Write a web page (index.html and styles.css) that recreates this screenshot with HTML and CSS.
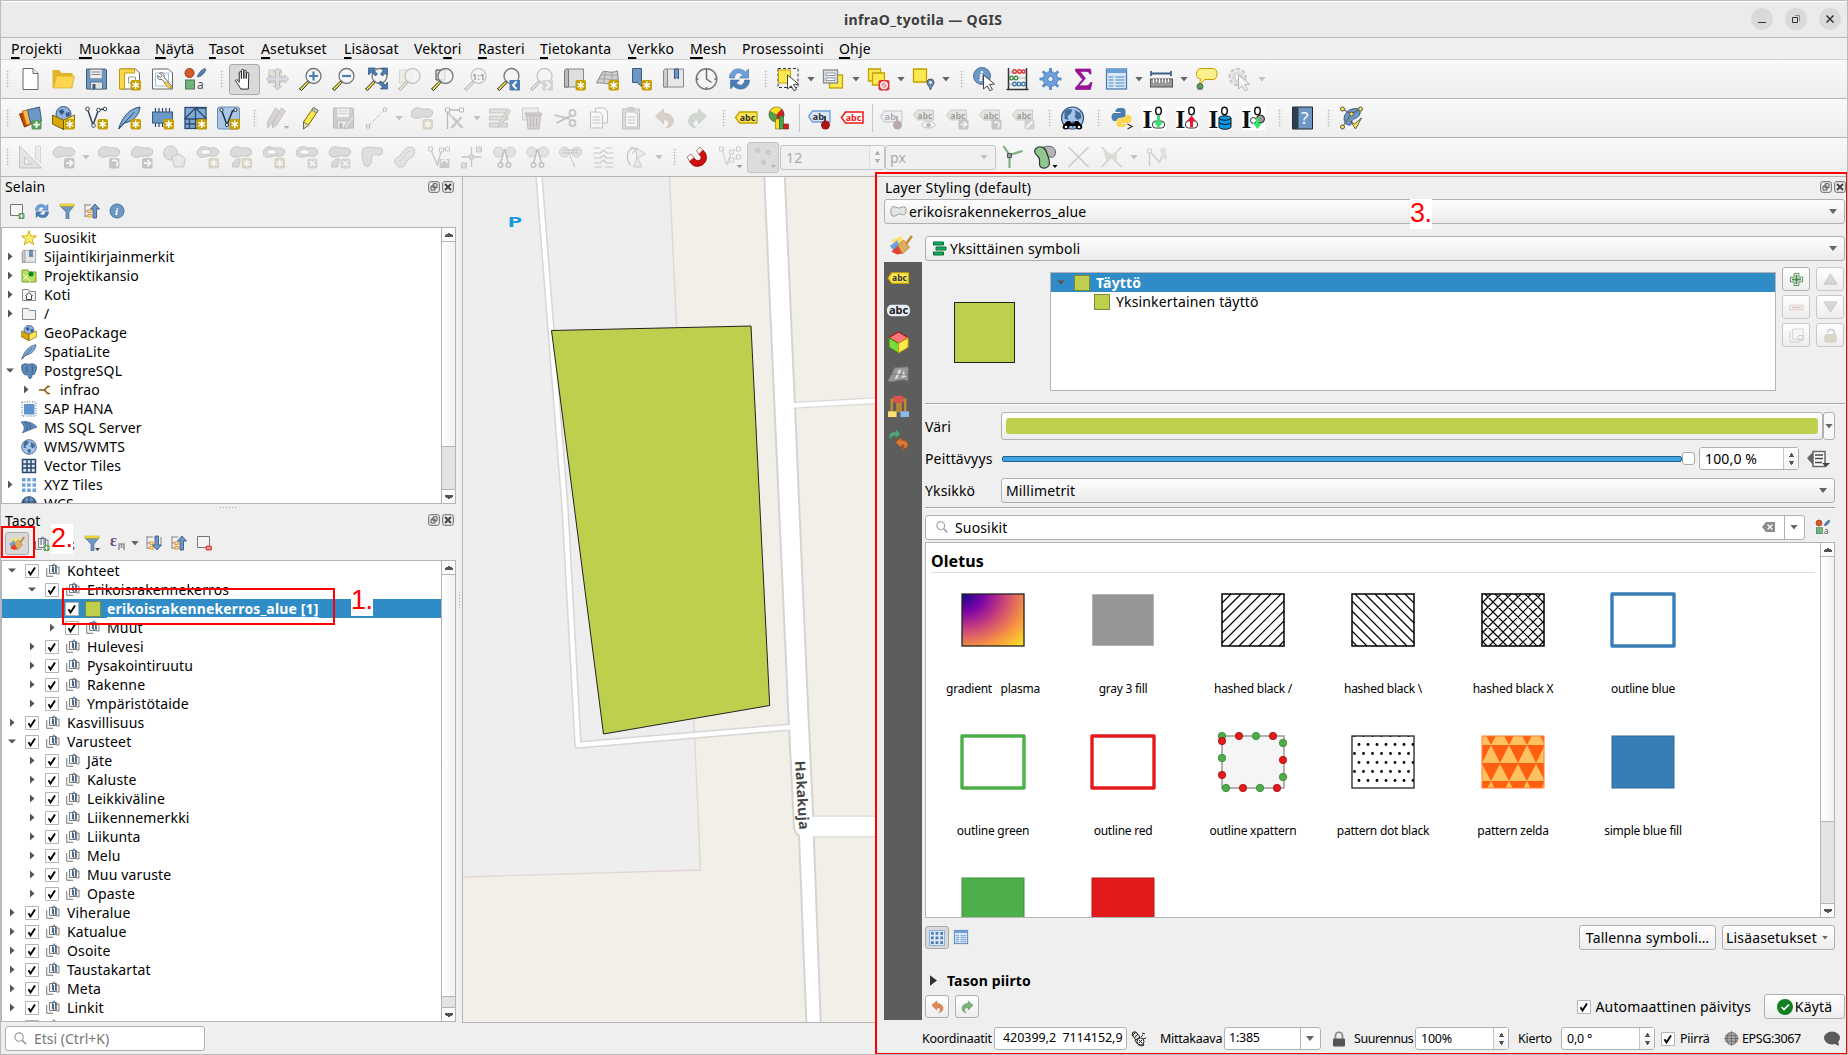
FILE: index.html
```html
<!DOCTYPE html>
<html lang="fi">
<head>
<meta charset="utf-8">
<title>infraO_tyotila — QGIS</title>
<link rel="stylesheet" href="styles.css">
</head>
<body>
<svg class="defs" aria-hidden="true">
<defs>
<pattern id="hz" width="18" height="36" patternUnits="userSpaceOnUse"><rect width="18" height="36" fill="#ff6010"/><path d="M0 18L9 0L18 18zM-9 36L0 19L9 36zM9 36L18 19L27 36z" fill="#ffc060"/></pattern>
<pattern id="dots" width="9" height="18" patternUnits="userSpaceOnUse"><circle cx="4.500" cy="1.500" r="1.400"/><circle cx="0" cy="10.500" r="1.400"/><circle cx="9" cy="10.500" r="1.400"/></pattern>
<radialGradient id="plasma" cx="0" cy="0" r="1.400"><stop offset="0" stop-color="#0d0887"/><stop offset=".25" stop-color="#7e03a8"/><stop offset=".5" stop-color="#cc4778"/><stop offset=".75" stop-color="#f89540"/><stop offset="1" stop-color="#f6e626"/></radialGradient>
</defs>
</svg>
<svg class="defs symbols" aria-hidden="true">
<symbol id="star" viewBox="0 0 24 24"><rect x="13" y="13" width="10.500" height="10.500" rx="2" fill="#c4a000"/><path d="M18.200 14.500v7.500M15 16.300l6.500 3.900M21.500 16.300L15 20.200" stroke="#fff" stroke-width="1.500"/></symbol>
<symbol id="new" viewBox="0 0 24 24"><path d="M4.500 1.500h10l5 5v16h-15z" fill="#fff" stroke="#666"/><path d="M14.500 1.500v5h5" fill="#eee" stroke="#666"/></symbol>
<symbol id="open" viewBox="0 0 24 24"><path d="M1 3h7l2 3h11v15H1z" fill="#e4b32a"/><path d="M5 9h18l-3 12H2z" fill="#fdd54f" stroke="#d9a81f" stroke-width=".7"/></symbol>
<symbol id="save" viewBox="0 0 24 24"><path d="M2 2h19l1 1v19H2z" fill="#6d97c4" stroke="#415a75"/><path d="M5.500 2.500h12v9h-12z" fill="#eee" stroke="#888" stroke-width=".6"/><path d="M7 5h9M7 7.500h9" stroke="#888"/><path d="M6 15h12v7H6z" fill="#dfe3e6" stroke="#415a75" stroke-width=".7"/><path d="M8 17h3v5H8z" fill="#415a75"/></symbol>
<symbol id="layout" viewBox="0 0 24 24"><path d="M3 2h15l4 4v16H3z" fill="#fff" stroke="#666"/><path d="M2 2h15v4H7v16H2z" fill="#fcd64f" stroke="#c4a000"/><path d="M11 10h7v6h-7z" fill="none" stroke="#999"/><use href="#star"/></symbol>
<symbol id="manager" viewBox="0 0 24 24"><path d="M2 2h16l4 4v16H2z" fill="#fff" stroke="#666"/><rect x="5" y="6" width="13" height="13" fill="none" stroke="#9cc0e4"/><path d="M9 6c3-1 5 1 4.500 4l8 9.500-2 2-8-9c-3 .5-5-1-4.500-4l3 2 1.500-2z" fill="#f4f4f4" stroke="#666"/><path d="M16 15l4.500 5-1.500 2-5-5.500z" fill="#fcd64f" stroke="#a80" stroke-width=".7"/></symbol>
<symbol id="styles" viewBox="0 0 24 24"><circle cx="6" cy="6" r="4.500" fill="#d45a2a" stroke="#9a3c18"/><path d="M14 10c0-3 4-7 7-8.500l1.500 1C21 6 18 10 14 10z" fill="#5380b5" stroke="#2f5180" stroke-width=".7"/><rect x="2" y="13" width="9" height="9" fill="#72b37c" stroke="#4a7c55"/><text x="13.500" y="22" class="ic" font-size="12" fill="#555">a</text></symbol>
<symbol id="hand" viewBox="0 0 24 24"><path d="M8 22c-1-3-4-6-5.500-9 1-1.500 2.500-.7 4 2V5c0-1.700 2.300-1.700 2.300 0v6V2.800c0-1.800 2.500-1.800 2.500 0V11V3.500c0-1.700 2.400-1.700 2.400 0V11l.6-5.500c.3-1.500 2.400-1.200 2.200.4L16 22z" fill="#fff" stroke="#222"/></symbol>
<symbol id="pan" viewBox="0 0 24 24"><rect x="3" y="3" width="13" height="13" fill="#d8c050" stroke="#a08820"/><path d="M12 1l4 4h-2v5h5V8l4 4-4 4v-2h-5v5h2l-4 4-4-4h2v-5H5v2l-4-4 4-4v2h5V5H8z" fill="#9db5d2" stroke="#3e5e85"/></symbol>
<symbol id="lens" viewBox="0 0 24 24"><path d="M1 22l8-8 1.500 1.500-7.500 8z" fill="#fce94f" stroke="#222"/><path d="M8.500 14l1.500-1.500 2 2L10.500 16z" fill="#222"/><circle cx="15" cy="9" r="7.500" fill="#f2f4f4" fill-opacity=".8" stroke="#777" stroke-width="1.300"/></symbol>
<symbol id="zin" viewBox="0 0 24 24"><use href="#lens"/><path d="M10.500 9h9M15 4.500v9" stroke="#4c7cb4" stroke-width="2.200"/></symbol>
<symbol id="zout" viewBox="0 0 24 24"><use href="#lens"/><path d="M10.500 9h9" stroke="#4c7cb4" stroke-width="2.200"/></symbol>
<symbol id="zfull" viewBox="0 0 24 24"><use href="#lens"/><path d="M4 1h7L9 3l4 4-2 2-4-4-3 3zM23 1v7l-2-2-3 3-2-2 3-4-2-2zM23 22h-7l2-2-4-4 2-2 5 4 2-3z" fill="#4c7cb4" stroke="#2c4f7c" stroke-width=".7"/></symbol>
<symbol id="zsel" viewBox="0 0 24 24"><rect x="2" y="3" width="13" height="13" fill="#e9e0a0" stroke="#b8a860"/><use href="#lens"/></symbol>
<symbol id="zlay" viewBox="0 0 24 24"><path d="M5.500 3h9v10h-9z" fill="#ddd" stroke="#444"/><use href="#lens"/></symbol>
<symbol id="z11" viewBox="0 0 24 24"><use href="#lens"/><text x="8.500" y="12.500" class="icb" font-size="9" textLength="13" lengthAdjust="spacingAndGlyphs">1:1</text></symbol>
<symbol id="zlast" viewBox="0 0 24 24"><use href="#lens"/><rect x="13" y="13" width="10.500" height="10.500" fill="#4c7cb4"/><path d="M20 14.500l-3.500 3.700 3.500 3.700" fill="none" stroke="#fff" stroke-width="2"/></symbol>
<symbol id="znext" viewBox="0 0 24 24"><use href="#lens"/><rect x="13" y="13" width="10.500" height="10.500" fill="#8aa"/><path d="M16.500 14.500l3.500 3.700-3.500 3.700" fill="none" stroke="#fff" stroke-width="2"/></symbol>
<symbol id="nmap" viewBox="0 0 24 24"><path d="M5 2h16v18H2V5z" fill="#dcdedf" stroke="#888"/><path d="M2 20V4c1-3 4-3 4 0v16z" fill="#bbb" stroke="#777"/><use href="#star"/></symbol>
<symbol id="n3d" viewBox="0 0 24 24"><path d="M1 16L7 5c4-2 7 2 15-1l1 12c-8 3-14-1-22 0z" fill="#cfd1cf" stroke="#888"/><path d="M3 12c8-1 12 2 20 0M5 8c7-1 10 1 17 0M10 5L8 16M16 5l1 12" stroke="#999" stroke-width=".8" fill="none"/><use href="#star"/></symbol>
<symbol id="nbook" viewBox="0 0 24 24"><path d="M4 1.500h9v18l-4.500-4-4.500 0z" fill="#6d97c4" stroke="#415a75"/><use href="#star"/></symbol>
<symbol id="book" viewBox="0 0 24 24"><path d="M5 2h17v18H2V5z" fill="#e6e7e8" stroke="#888"/><path d="M2 20V4c1-3 4-3 4 0v16z" fill="#ccc" stroke="#888"/><path d="M13 2h4v10l-2-2-2 2z" fill="#6d97c4" stroke="#3a5a80"/></symbol>
<symbol id="clock" viewBox="0 0 24 24"><circle cx="12" cy="12" r="10.300" fill="#f4f4f4" stroke="#777" stroke-width="1.400"/><path d="M12 4v8l5 3.500M12 2v2M12 20v2M2 12h2M20 12h2" fill="none" stroke="#666" stroke-width="1.400"/></symbol>
<symbol id="refresh" viewBox="0 0 24 24"><path d="M2 11C2 2 12-1 18 5l3-3v9h-9l3-3c-3-4-8-2-8 3z" fill="#6d9fd8" stroke="#3d6da5" stroke-width=".6"/><path d="M22 13c0 9-10 12-16 6l-3 3v-9h9l-3 3c3 4 8 2 8-3z" fill="#4c7cb4" stroke="#3d6da5" stroke-width=".6"/></symbol>
<symbol id="cur" viewBox="0 0 24 24"><path d="M11 8l11 9-5 .5 3 5-2.500 1.300-2.800-5-3.700 3.200z" fill="#fff" stroke="#444"/></symbol>
<symbol id="sel" viewBox="0 0 24 24"><rect x="1.500" y="1.500" width="20" height="19" fill="none" stroke="#333" stroke-dasharray="3 2"/><path d="M2 3h12v13H2z" fill="#fce94f" stroke="#c4a000"/><use href="#cur"/></symbol>
<symbol id="selform" viewBox="0 0 24 24"><rect x="8" y="8" width="13" height="13" fill="#fce94f" stroke="#c4a000" stroke-width="1.300"/><rect x="2" y="3" width="14" height="13" fill="#e4e4e4" stroke="#888" stroke-width="1.300"/><path d="M4.500 6h9v2.500h-9zM4.500 11h9v2.500h-9z" fill="#fff" stroke="#678" stroke-width=".7"/></symbol>
<symbol id="desel" viewBox="0 0 24 24"><path d="M2 2h12v12H2z" fill="#fce94f" stroke="#c4a000" stroke-width="1.300"/><path d="M6 6h12v12H6z" fill="#fce94f" stroke="#c4a000" stroke-width="1.300"/><rect x="12" y="13" width="11" height="10.500" rx="2" fill="#e03030"/><circle cx="17.500" cy="18.200" r="3.300" fill="#e88" stroke="#fff" stroke-width="1.300"/><path d="M20 16l-5 4.500" stroke="#fff"/></symbol>
<symbol id="selloc" viewBox="0 0 24 24"><path d="M2 2h13v13H2z" fill="#fce94f" stroke="#c4a000" stroke-width="1.300"/><path d="M19 23c-1-4-3.500-5-3.500-7.500a3.500 3.500 0 017 0C22.500 18 20 19 19 23z" fill="#6d8fae" stroke="#456"/><circle cx="19" cy="15.500" r="1.200" fill="#fff"/></symbol>
<symbol id="ident" viewBox="0 0 24 24"><circle cx="9.500" cy="9" r="8.500" fill="#6d97c4" stroke="#4c74a0"/><text x="6.500" y="14" class="ics it" font-size="14" fill="#fff">i</text><use href="#cur"/></symbol>
<symbol id="abac" viewBox="0 0 24 24"><path d="M3 1v22M21 1v22M1 22.500h22" stroke="#333" stroke-width="1.500"/><path d="M3 5h18M3 11h18M3 17h18" stroke="#888" stroke-width=".7"/><g fill="#fff" stroke-width="1.400"><g stroke="#d33"><circle cx="9" cy="4.500" r="1.800"/><circle cx="14" cy="4.500" r="1.800"/><circle cx="18" cy="4.500" r="1.500"/></g><g stroke="#4a8c4a"><circle cx="6" cy="11" r="1.800"/><circle cx="10.500" cy="11" r="1.800"/></g><g stroke="#3d79a8"><circle cx="9" cy="17" r="1.800"/><circle cx="13.500" cy="17" r="1.800"/><circle cx="18" cy="17" r="1.800"/></g></g></symbol>
<symbol id="gear" viewBox="0 0 24 24"><g stroke="#5f92cc" stroke-width="3"><path d="M12 1v22M1 12h22M4.200 4.200l15.600 15.600M19.800 4.200L4.200 19.800"/></g><circle cx="12" cy="12" r="7.500" fill="#6ea0dc" stroke="#4c7cb4" stroke-width=".7"/><circle cx="12" cy="12" r="2.700" fill="#f4f4f4" stroke="#4c7cb4"/></symbol>
<symbol id="sigma" viewBox="0 0 24 24"><path d="M4 2h15l.6 5h-1.500c-.5-2-1.500-2.600-4-2.600H8.500l5.500 7-6.500 7.400H14c3 0 4-1 5-3.300h1.500L19 22.500H4v-1.800l7-8.200L4 4z" fill="#a0109c" stroke="#7a0878" stroke-width=".6"/></symbol>
<symbol id="table" viewBox="0 0 24 24"><rect x="2" y="2" width="20" height="20" fill="#dbe8f7" stroke="#4c7cb4" stroke-width="1.300"/><path d="M2 2h20v4H2z" fill="#6d9fd8"/><path d="M4 10h5M4 13h5M4 16h5M4 19h5M11 10h9M11 13h9M11 16h9M11 19h9" stroke="#7ba6d6" stroke-width="1.500"/></symbol>
<symbol id="measure" viewBox="0 0 24 24"><path d="M1 6.500h21M1.500 4v5M21.500 4v5" stroke="#3d5f88" stroke-width="1.800"/><rect x="1" y="12" width="22" height="8" fill="#999" stroke="#555"/><path d="M4 12v4M7 12v3M10 12v4M13 12v3M16 12v4M19 12v3" stroke="#fff"/></symbol>
<symbol id="tip" viewBox="0 0 24 24"><path d="M6 1.500h13c5 0 4.500 11 0 11h-9L5 18l1-6C.5 12 1 1.500 6 1.500z" fill="#fcef8c" stroke="#c4a000"/><circle cx="5.500" cy="19.500" r="3" fill="#5aa05a" stroke="#3a6a3a"/></symbol>
<symbol id="action" viewBox="0 0 24 24"><circle cx="10" cy="10" r="8" fill="#ddd" stroke="#888" stroke-width="2.500" stroke-dasharray="4 2"/><circle cx="10" cy="10" r="5.500" fill="#9db0c0"/><path d="M8.500 7l5 3-5 3z" fill="#fff"/><use href="#cur"/></symbol>
<symbol id="dsm" viewBox="0 0 24 24"><path d="M1 8l9-3 5 12-9 4z" fill="#c64600" stroke="#8a3000"/><path d="M4 5l9-2 4 13-9 3z" fill="#fcb94f" stroke="#b07a10"/><path d="M9 4l12-3 2 14-11 2z" fill="#6d97c4" stroke="#3a5a80"/><rect x="13" y="14" width="10" height="9.500" rx="1.500" fill="#5a9c5a"/><path d="M18 15.500v6.500M14.800 18.700h6.500" stroke="#fff" stroke-width="1.800"/></symbol>
<symbol id="gpkg" viewBox="0 0 24 24"><circle cx="12" cy="8" r="7.500" fill="#8fb3dc" stroke="#345680"/><path d="M7 5l4-2 2 3-3 3zM14 7l4-1v4l-3 1z" fill="#345680"/><path d="M1 9l11 5v9.500L1 18z" fill="#d8a800" stroke="#5a4300" stroke-width=".8"/><path d="M23 9l-11 5v9.500L23 18z" fill="#fce94f" stroke="#5a4300" stroke-width=".8"/></symbol>
<symbol id="gpkgn" viewBox="0 0 24 24"><use href="#gpkg"/><use href="#star"/></symbol>
<symbol id="shp" viewBox="0 0 24 24"><path d="M3 3l5.500 16L14 4l5-1" fill="none" stroke="#345" stroke-width="1.500"/><g fill="#fff" stroke="#345"><circle cx="3" cy="3" r="1.800"/><circle cx="9" cy="19.500" r="1.800"/><circle cx="14" cy="4" r="1.800"/><circle cx="20.500" cy="3" r="1.800"/></g><use href="#star"/></symbol>
<symbol id="feather" viewBox="0 0 24 24"><path d="M1 23C5 11 11 3 22.500 1 22 8 17 15 7 17z" fill="#7fabd9" stroke="#2d4a6c"/><path d="M1.500 22.500L17 6" stroke="#2d4a6c"/></symbol>
<symbol id="feathern" viewBox="0 0 24 24"><use href="#feather"/><use href="#star"/></symbol>
<symbol id="chip" viewBox="0 0 24 24"><path d="M5 2v19M8.500 2v19M12 2v19M15.500 2v19M19 2v19" stroke="#2d4a6c" stroke-width="1.200"/><rect x="2" y="6" width="20" height="11" fill="#6d97c4" stroke="#345680"/><use href="#star"/></symbol>
<symbol id="mesh" viewBox="0 0 24 24"><rect x="1.500" y="1.500" width="21" height="21" fill="#7fa9d6" stroke="#2d4a6c" stroke-width="1.300"/><path d="M12 1v22M1 13h22M1 13L12 2l11 11M12 2l11 0M2 18h10M6 13v10" stroke="#2d4a6c" stroke-width="1.300" fill="none"/><use href="#star"/></symbol>
<symbol id="virt" viewBox="0 0 24 24"><rect x="1" y="1" width="22" height="22" rx="2" fill="#a9c6e6" stroke="#6d8fb5"/><path d="M5 4l5.500 15L16 5l4-1" fill="none" stroke="#234" stroke-width="1.500"/><g fill="#fff" stroke="#234"><circle cx="5" cy="4" r="1.600"/><circle cx="10.500" cy="19" r="1.600"/><circle cx="19" cy="4" r="1.600"/></g><use href="#star"/></symbol>
<symbol id="pencil" viewBox="0 0 24 24"><path d="M5 16L15 1.500l4.500 3L10 19l-5 4z" fill="#fce94f" stroke="#7a6500"/><path d="M5 16l5 3-5 4z" fill="#e8d8b8" stroke="#555" stroke-width=".7"/><path d="M15 1.500l4.500 3-1.500 2.500-4.500-3z" fill="#ccc" stroke="#777"/></symbol>
<symbol id="pencils" viewBox="0 0 24 24"><path d="M2 16L10 2l4 3-8 13-4 4zM7 17L16 2l4 3-9 14-4 3z" fill="#b89890" stroke="#866"/><path d="M18 20h6l-3 3z" fill="#444"/></symbol>
<symbol id="savee" viewBox="0 0 24 24"><use href="#save"/><path d="M13 20l7-10 3 2-7 10-3 1z" fill="#caa" stroke="#866"/></symbol>
<symbol id="line" viewBox="0 0 24 24"><path d="M4 20L20 4" stroke="#555" stroke-dasharray="4 2"/><path d="M2 19h3v3H2zM19 2h3v3h-3z" fill="#fff" stroke="#555"/></symbol>
<symbol id="blob" viewBox="0 0 24 24"><path d="M6 2c4-1 5 1 8 1s8-1 9 3-3 6-7 5-6 2-11 1S1 4 6 2z" fill="#a9b0a9" stroke="#6a706a"/></symbol>
<symbol id="b0" viewBox="0 0 24 24"><use href="#blob"/><rect x="12.500" y="13" width="10.500" height="10.500" rx="2" fill="#777"/><path d="M14.500 18.200h6M18 15l3 3.200-3 3.200" stroke="#fff" stroke-width="1.800" fill="none"/></symbol>
<symbol id="b1" viewBox="0 0 24 24"><use href="#blob"/><rect x="12.500" y="13" width="10.500" height="10.500" rx="2" fill="#777"/><path d="M15.500 16a3.300 3.300 0 114 5.200" stroke="#fff" stroke-width="1.600" fill="none"/></symbol>
<symbol id="b2" viewBox="0 0 24 24"><use href="#blob"/><use href="#star"/></symbol>
<symbol id="b3" viewBox="0 0 24 24"><use href="#blob"/><ellipse cx="10" cy="7" rx="5" ry="2.500" fill="#fff" stroke="#777"/><use href="#star"/></symbol>
<symbol id="b4" viewBox="0 0 24 24"><use href="#blob"/><path d="M4 22c-1-5 4-9 8-8l-2 8z" fill="#a9b0a9" stroke="#777"/><use href="#star"/></symbol>
<symbol id="b5" viewBox="0 0 24 24"><use href="#blob"/><ellipse cx="10" cy="7" rx="5" ry="2.500" fill="#fff" stroke="#777"/><rect x="13" y="13.500" width="10" height="10" rx="2" fill="#b99"/><path d="M15.500 16l5 5M20.500 16l-5 5" stroke="#fff" stroke-width="1.700"/></symbol>
<symbol id="b6" viewBox="0 0 24 24"><use href="#blob"/><path d="M4 22c-1-5 4-9 8-8l-2 8z" fill="#a9b0a9" stroke="#777"/><rect x="13" y="13.500" width="10" height="10" rx="2" fill="#b99"/><path d="M15.500 16l5 5M20.500 16l-5 5" stroke="#fff" stroke-width="1.700"/></symbol>
<symbol id="b7" viewBox="0 0 24 24"><path d="M3 3c5-2 10 0 18 0 3 4 0 8-4 7s-6 0-6 5-3 8-6 6S0 5 3 3z" fill="#b5bab2" stroke="#777"/></symbol>
<symbol id="b8" viewBox="0 0 24 24"><path d="M3 13C8 12 10 2 16 2c8 0 6 9 1 11s-4 8-9 9-9-7-5-9z" fill="#c5cac2" stroke="#777"/><path d="M6 16c5-2 6-10 11-10" stroke="#888" fill="none"/></symbol>
<symbol id="b9" viewBox="0 0 24 24"><circle cx="8" cy="8" r="7" fill="#b5bab2" stroke="#777"/><path d="M9 12l8-3 6 5-2 8h-9z" fill="#ccd4dc" stroke="#777"/></symbol>
<symbol id="vert" viewBox="0 0 24 24"><path d="M5 23V4h14M5 4l4 7" fill="none" stroke="#555" stroke-width="1.300"/><path d="M3 2h4v4H3zM17 2h4v4h-4z" fill="#fff" stroke="#555"/><path d="M9 22l10-11M10 11l10 11" stroke="#777" stroke-width="2.500"/></symbol>
<symbol id="multi" viewBox="0 0 24 24"><path d="M2 3h18v4H2zM2 10h18v4H2zM2 17h18v4H2z" fill="#c8c090" stroke="#776"/><path d="M11 18L20 3l3 2-9 14-3 2z" fill="#caa" stroke="#866"/></symbol>
<symbol id="trash" viewBox="0 0 24 24"><path d="M2 2h16v12H2z" fill="#ddd" stroke="#888"/><path d="M6 10h14l-1.500 13h-11zM5 7h16v2H5z" fill="#c99" stroke="#844"/><path d="M10 12v9M13 12v9M16 12v9" stroke="#844"/></symbol>
<symbol id="cut" viewBox="0 0 24 24"><path d="M1 9l15 4M3 17l14-7" stroke="#666" stroke-width="1.800"/><circle cx="19" cy="7" r="3" fill="none" stroke="#a66" stroke-width="1.800"/><circle cx="19" cy="17" r="3" fill="none" stroke="#a66" stroke-width="1.800"/></symbol>
<symbol id="copy" viewBox="0 0 24 24"><path d="M9 2h9l3 3v12H9z" fill="#fff" stroke="#666"/><path d="M4 6h9l3 3v13H4z" fill="#fff" stroke="#666"/><path d="M6 11h8M6 14h8M6 17h8" stroke="#777"/></symbol>
<symbol id="paste" viewBox="0 0 24 24"><path d="M3 3h17v20H3z" fill="#bbb" stroke="#666"/><path d="M6 6h9l3 3v12H6z" fill="#fff" stroke="#777"/><path d="M8 11h8M8 14h8M8 17h8" stroke="#777"/><path d="M8 1h7v4H8z" fill="#888"/></symbol>
<symbol id="undo" viewBox="0 0 24 24"><path d="M3 10l8-7v4c12 0 13 13 3 15 5-5 2-9-3-8v4z" fill="#e08850" stroke="#b86030" stroke-width=".7"/></symbol>
<symbol id="redo" viewBox="0 0 24 24"><path d="M21 10l-8-7v4C1 7 0 20 10 22c-5-5-2-9 3-8v4z" fill="#7ab27a" stroke="#4a8a4a" stroke-width=".7"/></symbol>
<symbol id="abc" viewBox="0 0 24 24"><path d="M1 11.500L5 6h17.500v11H5z" fill="#fce94f" stroke="#c4a000" stroke-width="1.300"/><text x="5.300" y="15" class="icb" font-size="9" fill="#333" textLength="15.500" lengthAdjust="spacingAndGlyphs">abc</text></symbol>
<symbol id="abcr" viewBox="0 0 24 24"><path d="M1 11.500L5 6h17.500v11H5z" fill="#fff" stroke="#f01818" stroke-width="1.500"/><text x="5.300" y="15" class="icb" font-size="9" fill="#f01818" textLength="15.500" lengthAdjust="spacingAndGlyphs">abc</text></symbol>
<symbol id="abcp" viewBox="0 0 24 24"><path d="M1 10.500L5 5h17.500v11H5z" fill="#d8e8fa" stroke="#6da0e0" stroke-width="1.300"/><text x="5" y="14" class="icb" font-size="9.500" fill="#333">ab</text><path d="M17.500 10v8" stroke="#444" stroke-width="2"/><circle cx="18" cy="19" r="4.500" fill="#a81818"/></symbol>
<symbol id="tagg" viewBox="0 0 24 24"><path d="M1 9L5 4h16v10H5z" fill="#cfc9a0" stroke="#8a8460"/><text x="5" y="12.500" class="icb" font-size="8.500" textLength="15" lengthAdjust="spacingAndGlyphs">abc</text></symbol>
<symbol id="abcg" viewBox="0 0 24 24"><use href="#tagg"/><rect x="13" y="13.500" width="10" height="10" rx="1.500" fill="#777"/><path d="M15 18.500h5M18 15.500l3 3-3 3" fill="none" stroke="#fff" stroke-width="1.600"/></symbol>
<symbol id="abch" viewBox="0 0 24 24"><use href="#tagg"/><rect x="13" y="13.500" width="10" height="10" rx="1.500" fill="#777"/><path d="M16 17a2.700 2.700 0 113 4.200" fill="none" stroke="#fff" stroke-width="1.500"/></symbol>
<symbol id="abci" viewBox="0 0 24 24"><use href="#tagg"/><rect x="13" y="13.500" width="10" height="10" rx="1.500" fill="#998"/><path d="M15 21.500l6-6" stroke="#fff" stroke-width="2"/></symbol>
<symbol id="abce" viewBox="0 0 24 24"><use href="#tagg"/><path d="M9 19c3-5 11-5 14 0-3 4-11 4-14 0z" fill="#fff" stroke="#555"/><circle cx="16" cy="19" r="2.300" fill="#555"/></symbol>
<symbol id="diag" viewBox="0 0 24 24"><circle cx="9" cy="8.500" r="7.500" fill="#d02020" stroke="#333" stroke-width=".7"/><path d="M9 8.500V16A7.500 7.500 0 012.500 5z" fill="#4aa34a"/><path d="M9 8.500L2.500 5A7.500 7.500 0 0114 3z" fill="#f8e020"/><path d="M8 13h4v10H8z" fill="#f8e020" stroke="#860" stroke-width=".6"/><path d="M12 10h4v13h-4z" fill="#4aa34a" stroke="#353" stroke-width=".6"/><path d="M16 18h5v5h-5z" fill="#d02020" stroke="#622" stroke-width=".6"/></symbol>
<symbol id="globe" viewBox="0 0 24 24"><circle cx="12" cy="12" r="11" fill="#a7c5e8" stroke="#345680" stroke-width="1.200"/><path d="M4 6c3-4 6-3 8-2l-2 4-3 2 1 4-4-1zM14 4l6 3 1 5-4 2-3-3 1-3zM9 16l5-1 1 4-3 3z" fill="#426a9c"/></symbol>
<symbol id="msearch" viewBox="0 0 24 24"><use href="#globe"/><path d="M5 23.500c-3 0-3.500-3-2-4.500l3.500-4h3l1 2.500h3l1-2.500h3l3.500 4c1.500 1.500 1 4.500-2 4.500s-4-1.500-4-3.500H9c0 2-1 3.500-4 3.500z" fill="#000"/><circle cx="5.500" cy="21" r="1.300" fill="#fff"/><circle cx="18.500" cy="21" r="1.300" fill="#fff"/></symbol>
<symbol id="python" viewBox="0 0 24 24"><path d="M11 2c5 0 5 1 5 5v3c0 3-9 0-9 5H5c-4 0-4-8 0-8h6V6H6c0-3 1-4 5-4z" fill="#4a80b0"/><path d="M12 21c-5 0-5-1-5-5v-1c0-4 9-1 9-6h3c4 0 4 8 0 8h-7v1h5c0 2-1 3-5 3z" fill="#fcd64f"/><path d="M18 18l4.500 2.500-4.500 2.500" fill="none" stroke="#333" stroke-width="1.200"/></symbol>
<symbol id="io" viewBox="0 0 24 24"><path d="M0 0h24v24H0z" fill="#fff"/><text x="0" y="22" class="ics" font-size="25" fill="#111">I</text><ellipse cx="16" cy="5" rx="2.800" ry="3.700" fill="none" stroke="#111" stroke-width="1.500"/></symbol>
<symbol id="io1" viewBox="0 0 24 24"><use href="#io"/><rect x="10" y="15" width="12" height="7" rx="3" fill="#fff" stroke="#333"/><path d="M14.500 10h3v6h3L16 22l-4.500-6h3z" fill="#2ee66b"/></symbol>
<symbol id="io2" viewBox="0 0 24 24"><use href="#io"/><rect x="10" y="15" width="12" height="7" rx="3" fill="#fff" stroke="#333"/><path d="M14.500 21v-6h-3L16 9.500l4.500 5.500h-3v6z" fill="#f01838"/></symbol>
<symbol id="io3" viewBox="0 0 24 24"><use href="#io"/><path d="M10.500 12v9c0 3 12 3 12 0v-9z" fill="#089ae8" stroke="#111"/><ellipse cx="16.500" cy="12" rx="6" ry="2.200" fill="#089ae8" stroke="#111"/><path d="M10.500 16.500c1 2.500 11 2.500 12 0" fill="none" stroke="#111"/></symbol>
<symbol id="io4" viewBox="0 0 24 24"><use href="#io"/><circle cx="12" cy="14.500" r="3" fill="#fff" stroke="#222"/><circle cx="19" cy="13" r="4" fill="#999" stroke="#222"/><path d="M14.500 12h3v5h3L16 23l-4.500-6h3z" fill="#2ee66b"/></symbol>
<symbol id="help" viewBox="0 0 24 24"><path d="M2 1h20v22H2z" fill="#6d97c4" stroke="#222"/><path d="M2 1h6v22H2z" fill="#2d3e50"/><text x="10.500" y="18" class="icn" font-size="17" fill="#fff">?</text></symbol>
<symbol id="topo" viewBox="0 0 24 24"><path d="M5 10c3-7 9-8 15-7 3 8-5 9-7 11s0 6-4 5-5-5-4-9z" fill="#6d97c4" stroke="#345680"/><path d="M3 3l9 5 9-5M12 8L3 21" stroke="#666" fill="none" stroke-width="1.300"/><g fill="#fce94f" stroke="#555"><circle cx="3" cy="3" r="2"/><circle cx="21" cy="3" r="2"/><circle cx="12" cy="8" r="2"/><circle cx="3" cy="21" r="2"/></g><path d="M11 15l4 3 7-6-6 11z" fill="#fce94f" stroke="#555"/></symbol>
<symbol id="square" viewBox="0 0 24 24"><path d="M1 1v22h22z M6 12v7h7z" fill="#d8c8b8" fill-rule="evenodd" stroke="#866"/><path d="M17 1h5v17l-5-5z" fill="#ddc" stroke="#999"/></symbol>
<symbol id="vr" viewBox="0 0 24 24"><path d="M4 4l7 16 4-15 6-1" fill="none" stroke="#777" stroke-width="1.400"/><path d="M2 2h4v4H2zM13 3h4v4h-4zM19 2h4v4h-4z" fill="#eee" stroke="#777"/><path d="M13 14h10v9H13z" fill="#888"/><path d="M15 18a3 3 0 016 0" fill="none" stroke="#fff" stroke-width="1.300"/></symbol>
<symbol id="cross" viewBox="0 0 24 24"><path d="M12 2v20M2 12h20" stroke="#777" stroke-width="1.400"/><path d="M10 10h4v4h-4zM2 18h5v5H2zM17 2h5v5h-5z" fill="#bbb" stroke="#777"/></symbol>
<symbol id="sciss" viewBox="0 0 24 24"><circle cx="6" cy="7" r="5" fill="#bcc4bc" stroke="#888"/><circle cx="18" cy="7" r="5" fill="#bcc4bc" stroke="#888"/><path d="M12 4l4 14M12 4L8 18" stroke="#666" stroke-width="1.500"/><circle cx="8" cy="20" r="2.300" fill="none" stroke="#966" stroke-width="1.500"/><circle cx="16" cy="20" r="2.300" fill="none" stroke="#966" stroke-width="1.500"/></symbol>
<symbol id="merge" viewBox="0 0 24 24"><circle cx="6" cy="7" r="5" fill="#bcc4bc" stroke="#888"/><circle cx="18" cy="7" r="5" fill="#bcc4bc" stroke="#888"/><path d="M4 8h16M4 5h16M12 10c0 5 3 6 4 12" stroke="#666" fill="none"/></symbol>
<symbol id="attrs" viewBox="0 0 24 24"><path d="M2 3h7M14 3h7M2 8h7l3-3 3 3h7M2 13h7l3-3 3 3h7M2 18h7l3-3 3 3h7M3 22h7M14 22h7" stroke="#777" fill="none" stroke-width="1.200"/></symbol>
<symbol id="rot" viewBox="0 0 24 24"><path d="M10 3C2 3 1 14 6 20M6 2l6 2-4 4" stroke="#777" fill="none" stroke-width="1.300"/><path d="M12 3l9 6-9 4zM9 22l4-10 4 10z" fill="#ddd" stroke="#888"/></symbol>
<symbol id="magnet" viewBox="0 0 24 24"><path d="M17 5c6 4 5 14-3 16-5 1-8-1-10-5l4.500-3.500c1 3 4 4 6 2.500s1.500-4-1-5.500z" fill="#d01010" stroke="#900"/><path d="M17 5l-3.500 4-2.500-3 3.500-4zM4 16l-2.500-4L5.500 9l3 3.500z" fill="#fff" stroke="#b77"/></symbol>
<symbol id="snap" viewBox="0 0 24 24"><path d="M3 3l5 17 5-13 7-4M8 20l5-5 7-3" fill="none" stroke="#888"/><path d="M1 2h4v4H1zM11 5h4v4h-4zM18 2h4v4h-4zM11 13h4v4h-4zM18 10h4v4h-4z" fill="#eee" stroke="#888"/><path d="M18 20h6l-3 3z"/></symbol>
<symbol id="pts" viewBox="0 0 24 24"><path d="M5 4h3v3H5zM16 6h3v3h-3zM11 16h3v3h-3z" fill="#eee" stroke="#777"/><path d="M20 20h5l-2.500 3z" fill="#666"/></symbol>
<symbol id="tedit" viewBox="0 0 24 24"><path d="M3 1l6 9v13M9 10l13-4" fill="none" stroke="#7fb27f" stroke-width="2.200"/><path d="M7 8.500h4v4H7z" fill="#999" stroke="#555"/></symbol>
<symbol id="avoid" viewBox="0 0 24 24"><path d="M10 2c6-2 12 0 12 5s-3 6-6 5-6-6-6-10z" fill="#b5b5b5" stroke="#666"/><path d="M3 3c4-3 9 0 10 4s5 10 2 14-9 2-9-2 1-6-2-8-4-6-1-8z" fill="#8fc78f" stroke="#333" stroke-width="1.200"/><path d="M19 20h5l-2.500 3z"/></symbol>
<symbol id="x1" viewBox="0 0 24 24"><path d="M2 2l20 20M22 2L2 22" stroke="#888" stroke-width="1.600"/></symbol>
<symbol id="x2" viewBox="0 0 24 24"><path d="M2 2l20 20M22 2L2 22" stroke="#888" stroke-width="1.200"/><path d="M4 6l8 3 6-3-1 10-6-4-4 4z" fill="#b8b090"/></symbol>
<symbol id="x3" viewBox="0 0 24 24"><path d="M5 21V6l10 11 6-13" fill="none" stroke="#888" stroke-width="1.400"/><path d="M15 4l5-2 3 11-4 2z" fill="#c8c0a8"/><path d="M3 4h4v4H3z" fill="#eee" stroke="#888"/></symbol>
<symbol id="sq" viewBox="0 0 16 16"><path d="M1.500 1.500h12v11h-12z" fill="#f4f4f4" stroke="#777"/></symbol>
<symbol id="sqadd" viewBox="0 0 16 16"><use href="#sq"/><rect x="9.500" y="10" width="6" height="6" rx="1.500" fill="#5a9c5a"/><path d="M12.500 11v4M10.500 13h4" stroke="#fff"/></symbol>
<symbol id="sqdel" viewBox="0 0 16 16"><use href="#sq"/><rect x="9.500" y="10.500" width="6.500" height="5" rx="1.500" fill="#e04848"/><path d="M11 13h3.500" stroke="#fff"/></symbol>
<symbol id="funnel" viewBox="0 0 16 16"><path d="M1 3h14l-5 6v7H7V9z" fill="#6d97c4" stroke="#41658f" stroke-width=".6"/><path d="M1 1h14v2.200H1z" fill="#fce94f" stroke="#c4a000" stroke-width=".6"/></symbol>
<symbol id="funneld" viewBox="0 0 16 16"><use href="#funnel"/><path d="M11 13h5l-2.500 3z" fill="#444"/></symbol>
<symbol id="eyed" viewBox="0 0 16 16"><path d="M11 12.500h5L13.500 16z" fill="#444"/><path d="M1 8c4-5 10-5 14 0-4 4-10 4-14 0z" fill="none" stroke="#777"/></symbol>
<symbol id="treeup" viewBox="0 0 16 16"><path d="M1 1v13M1 2h6M1 8h3M1 13h3" stroke="#888"/><path d="M4 7h3v2.500H4zM4 11.500h3V14H4z" fill="none" stroke="#f39a2a" stroke-width="1.200"/><path d="M11 1l4.500 5h-3v9h-3.500V6H6.500z" fill="#6d97c4" stroke="#2f5180" stroke-width=".8"/></symbol>
<symbol id="treedn" viewBox="0 0 16 16"><path d="M1 1v13M1 2h6M1 8h3M1 13h3M15 2v8" stroke="#888"/><path d="M4 7h3v2.500H4zM4 11.500h3V14H4z" fill="none" stroke="#f39a2a" stroke-width="1.200"/><path d="M11 15l4.500-5h-3V1H9v9H6.500z" fill="#6d97c4" stroke="#2f5180" stroke-width=".8"/></symbol>
<symbol id="info" viewBox="0 0 16 16"><circle cx="8" cy="8" r="7" fill="#6d97c4" stroke="#4c74a0"/><text x="6" y="12" class="ics it" font-size="11" fill="#fff">i</text></symbol>
<symbol id="fav" viewBox="0 0 16 16"><path d="M8 .8l2 5.200h5.500l-4.400 3.300 1.700 5.500L8 11.500l-4.800 3.300 1.700-5.500L.5 6H6z" fill="#fcf06c" stroke="#d1a91a"/></symbol>
<symbol id="pfold" viewBox="0 0 16 16"><path d="M1 2h6l1 2h7v10H1z" fill="#b8e05a" stroke="#7a9a3a"/><path d="M2 6l8 8M2 12l5-5" stroke="#eef8d0"/><circle cx="10" cy="6" r="2.500" fill="#0a8a1a"/></symbol>
<symbol id="fold" viewBox="0 0 16 16"><path d="M1.500 13.500v-11h6l1 2h6v9z" fill="#f2f2f2" stroke="#888"/></symbol>
<symbol id="home" viewBox="0 0 16 16"><use href="#fold"/><path d="M4.500 9L8 5.500 11.500 9M5.500 8.500v4h5v-4" fill="#fff" stroke="#444"/></symbol>
<symbol id="pg" viewBox="0 0 16 16"><path d="M1 2c3-2 5-1 7-.5C11 0 15 1 15.500 4c.3 2-1 5-2 6.500 1 0 0 1.500-2.500 1 0 3-.5 4-2 4s-1.800-1.500-1.800-4C4 13 2 11 1 7 .5 5 .3 3 1 2z" fill="#5c88b8" stroke="#33567f" stroke-width=".8"/><path d="M6 3c-1 3 0 5 0 7M11 3c1 2 .5 4 0 7" stroke="#33567f" fill="none" stroke-width=".8"/></symbol>
<symbol id="conn" viewBox="0 0 16 16"><path d="M2 8h6M13 4.500h-2.500L7.500 8l3 3.500H13" fill="none" stroke="#8a5a10" stroke-width="1.700"/></symbol>
<symbol id="hana" viewBox="0 0 16 16"><rect x="3" y="3" width="10.500" height="10.500" fill="#5b94cf"/><rect x="1" y="1" width="14" height="14" fill="none" stroke="#41658f" stroke-dasharray="1 1.500"/></symbol>
<symbol id="mssql" viewBox="0 0 16 16"><path d="M0 2c6-2 14 2 16 5L1 13c3-3 3-7-1-11z" fill="#5c88b8" stroke="#33567f" stroke-width=".6"/><path d="M4 2c3 3 3 6 1 9M8 3c2 3 2 4 1 7" stroke="#33567f" fill="none" stroke-width=".7"/></symbol>
<symbol id="vt" viewBox="0 0 16 16"><path d="M1.500 1.500h13v13h-13z" fill="#dce6f0" stroke="#2d4a6c" stroke-width="1.500"/><path d="M1 6h14M1 10h14M6 1v14M10 1v14" stroke="#2d4a6c" stroke-width="1.500"/></symbol>
<symbol id="xyz" viewBox="0 0 16 16"><path d="M1 1h3.500v3.500H1zM6.200 1h3.500v3.500H6.200zM11.500 1H15v3.500h-3.500zM1 6.200h3.500v3.500H1zM6.200 6.200h3.500v3.500H6.200zM11.500 6.200H15v3.500h-3.500zM1 11.500h3.500V15H1zM6.200 11.500h3.500V15H6.200zM11.500 11.500H15V15h-3.500z" fill="#6d9fd8"/></symbol>
<symbol id="wcs" viewBox="0 0 16 16"><circle cx="8" cy="8" r="7.300" fill="#6d97c4" stroke="#2d4a6c"/><path d="M8 1v14M1 6h14M4 2c-2 4-2 8 0 12M12 2c2 4 2 8 0 12" stroke="#2d4a6c" fill="none"/></symbol>
<symbol id="chk" viewBox="0 0 14 14"><path d="M.5 .5h13v13H.5z" fill="#fff" stroke="#b4b4b4"/><path d="M3.500 7.200l2 3.300L10 3.500" fill="none" stroke="#000" stroke-width="1.900"/></symbol>
<symbol id="grp" viewBox="0 0 14 14"><path d="M3.500 2.500h7v8h-7zM.7 5v8.300h6.500M10.500 4H13v7h-2.500" fill="#eee" fill-opacity=".6" stroke="#7d7d7d"/><path d="M6.500 9V3c0-2.500 3-2.500 3 0v5c0 3-2 3-2 1V4" fill="none" stroke="#4a6a8c"/></symbol>
<symbol id="grpadd" viewBox="0 0 16 16"><path d="M4.500 3.500h7v9h-7zM1.500 6v8.300h6.500M11.500 5H14v7" fill="#eee" fill-opacity=".6" stroke="#777"/><path d="M7 10V4c0-2.500 3-2.500 3 0v6" fill="none" stroke="#4a6a8c"/><rect x="9.500" y="10" width="6" height="6" rx="1.500" fill="#5a9c5a"/><path d="M12.500 11v4M10.500 13h4" stroke="#fff"/></symbol>
<symbol id="brush" viewBox="0 0 16 16"><path d="M1 5l7-3 2 5-7 1z" fill="#fce070"/><path d="M0 9l5-4 2 5-4 3z" fill="#6aa4df"/><path d="M1 13l4-4 4 5-4 1z" fill="#e8402e"/><path d="M5.500 8.500l4-3.500 4 5-5 4.500z" fill="#dfb062" stroke="#b07c28" stroke-width=".6"/><path d="M10.500 7l4-5.500L16 2.500l-4 5.500z" fill="#c58a30"/></symbol>
<symbol id="eps" viewBox="0 0 16 16"><text x="0" y="11" class="ics" font-size="16" fill="#7a4a80">ε</text><path d="M9 15V9h5v6M11.500 9v4" fill="none" stroke="#999" stroke-width="1.700"/></symbol>
<symbol id="float" viewBox="0 0 12 12"><rect x=".7" y=".7" width="10.600" height="10.600" rx="2" fill="none" stroke="#666"/><path d="M5 2.800h4v4H5zM3 5h4v4H3z" fill="#eee" stroke="#555"/></symbol>
<symbol id="close" viewBox="0 0 12 12"><rect x=".7" y=".7" width="10.600" height="10.600" rx="2" fill="none" stroke="#666"/><path d="M3 3l6 6M9 3L3 9" stroke="#444" stroke-width="2"/></symbol>
<symbol id="mag" viewBox="0 0 14 14"><circle cx="5.500" cy="5.500" r="4.500" fill="none" stroke="#999" stroke-width="1.200"/><path d="M9 9l4 4" stroke="#999" stroke-width="1.700"/></symbol>
<symbol id="poly" viewBox="0 0 16 16"><path d="M2 3c3-1 4 1 6.500 1S13 2 14.500 3s1 4 .3 7c-2 2-4.300-.5-6.300 0S5 13 2 12C-.5 10 0 4 2 3z" fill="#e4e4e4" stroke="#999"/></symbol>
<symbol id="single" viewBox="0 0 14 14"><path d="M.5 .5h10v3H.5zM3 5.500h10v3H3zM.5 10.500h10v3H.5z" fill="#12b060" stroke="#0a6a38"/></symbol>
<symbol id="tmask" viewBox="0 0 24 24"><rect x="0" y="6" width="24" height="12" rx="5" fill="#e6edf4"/><text x="2" y="15.500" class="icb" font-size="11" fill="#222" textLength="20" lengthAdjust="spacingAndGlyphs">abc</text></symbol>
<symbol id="cube" viewBox="0 0 24 24"><path d="M12 1l10 6-10 6L2 7z" fill="#f77" stroke="#a00"/><path d="M2 7l10 6v10L2 17z" fill="#7adc3a" stroke="#3a7a10"/><path d="M22 7l-10 6v10l10-6z" fill="#fce94f" stroke="#c4a000"/></symbol>
<symbol id="terrain" viewBox="0 0 24 24"><path d="M1 19L8 5l14-1v15c-7-4-14 2-21 0z" fill="#999" stroke="#777"/><path d="M8 17l4-10 3 0-4 9zM15 16l2-8 3 6z" fill="#ddd"/><path d="M5 12c6-2 10 2 17 0" stroke="#777" fill="none"/></symbol>
<symbol id="dep" viewBox="0 0 24 24"><path d="M8 5H5v12M16 5h3v12M11 8v10M14 8v10" stroke="#c58a30" stroke-width="2.600" fill="none"/><rect x="7" y="1" width="10" height="7" fill="#e05050"/><rect x="1" y="17" width="9" height="6" fill="#fce070"/><rect x="14" y="17" width="9" height="6" fill="#8ab8e8"/></symbol>
<symbol id="hist" viewBox="0 0 24 24"><path d="M14 7L9 2v3C0 5 1 12 5 13c-1-3 1-4 4-3.500V12z" fill="#5aa078" stroke="#387850" stroke-width=".7"/><path d="M9 16l6-5v3c9 0 9 8 1 9 3-3 2-5-1-4.500v3z" fill="#e07a30" stroke="#b05818" stroke-width=".7"/></symbol>
<symbol id="plus" viewBox="0 0 16 16"><path d="M5.500 1.500h5v4h4v5h-4v4h-5v-4h-4v-5h4z" fill="#fff" stroke="#4f8a50"/><path d="M8 3v10M3 8h10" stroke="#4f8a50" stroke-width="2"/></symbol>
<symbol id="minus" viewBox="0 0 16 16"><path d="M1 5.500h14v5H1z" fill="#fff" stroke="#a66"/><path d="M3 8h10" stroke="#a66" stroke-width="2"/></symbol>
<symbol id="up" viewBox="0 0 16 16"><path d="M8 2l7 11H1z" fill="#8a94a0" stroke="#555"/></symbol>
<symbol id="down" viewBox="0 0 16 16"><path d="M8 13l7-11H1z" fill="#8a94a0" stroke="#555"/></symbol>
<symbol id="dup" viewBox="0 0 16 16"><path d="M1 3v12h11M4 1h11v11H4zM10 8h5v5h-5z" fill="#f4f4f4" stroke="#777"/></symbol>
<symbol id="lockx" viewBox="0 0 16 16"><path d="M5 5c0-5 8-5 7 2" fill="none" stroke="#666" stroke-width="1.800"/><rect x="2" y="7" width="12" height="8" rx="1.500" fill="#a09868" stroke="#776"/></symbol>
<symbol id="lock" viewBox="0 0 12 16"><path d="M2.500 8V5c0-5 7-5 7 0v3" fill="none" stroke="#888" stroke-width="1.700"/><rect x="0" y="7.500" width="12" height="8" rx="1" fill="#555"/></symbol>
<symbol id="dd" viewBox="0 0 24 18"><path d="M0 8l6-6v13z" fill="#666"/><path d="M6 1.500h12v15H6z" fill="#fff" stroke="#666" stroke-width="1.500"/><path d="M8 5h8M8 8.500h8M8 12.500h7" stroke="#444" stroke-width="1.600"/><path d="M15 13h8l-4 4z" fill="#444"/></symbol>
<symbol id="clear" viewBox="0 0 13 10"><path d="M0 5l4-5h9v10H4z" fill="#8c8c8c"/><path d="M5.500 2.500l5 5M10.500 2.500l-5 5" stroke="#fff" stroke-width="1.200"/></symbol>
<symbol id="grid9" viewBox="0 0 16 16"><rect x=".5" y=".5" width="15" height="15" fill="#dce8f6" stroke="#8ab0dc"/><path d="M2 2h2.700v2.700H2zM6.600 2h2.700v2.700H6.600zM11.300 2H14v2.700h-2.700zM2 6.600h2.700v2.700H2zM6.600 6.600h2.700v2.700H6.600zM11.300 6.600H14v2.700h-2.700zM2 11.300h2.700V14H2zM6.600 11.300h2.700V14H6.600zM11.300 11.300H14V14h-2.700z" fill="#4c7cb4"/></symbol>
<symbol id="ok" viewBox="0 0 16 16"><circle cx="8" cy="8" r="8" fill="#118022"/><path d="M4.500 8l2.500 2.500 5-5" fill="none" stroke="#fff" stroke-width="1.600"/></symbol>
<symbol id="sat" viewBox="0 0 16 16"><path d="M2 1h3l4 5-4 3-4-5zM4.500 1l-3 4M7 3L3.500 6.500" fill="#ddd" stroke="#222"/><path d="M4 9c2 5 6 7 9 5l-3-4M10 6l2-2M12 8l3-1M11 2l3 1" fill="none" stroke="#222"/><circle cx="9.500" cy="10.500" r="3.500" fill="#eee" stroke="#222"/><path d="M8 9l3 3M11 9l-3 3" stroke="#222"/></symbol>
<symbol id="crs" viewBox="0 0 16 16"><circle cx="8" cy="8" r="6.500" fill="#aaa" stroke="#777"/><path d="M0 8h16M1.500 5h13M1.500 11h13M8 0v16M5 2c-2 4-2 8 0 12M11 2c2 4 2 8 0 12" fill="none" stroke="#666" stroke-width=".8"/></symbol>
<symbol id="msg" viewBox="0 0 16 16"><ellipse cx="8" cy="7" rx="8" ry="6.500" fill="#5a5a5a"/><path d="M9 12l6 3-1-6z" fill="#5a5a5a"/></symbol>
</svg>

<div class="window">
<header class="title"><h1>infraO_tyotila — QGIS</h1>
<div class="wbtns"><i><svg viewBox="0 0 22 22"><path d="M7 14.500h8" stroke="#333"/></svg></i><i><svg viewBox="0 0 22 22"><path d="M7.500 9.500h5v5h-5z" fill="none" stroke="#333"/><path d="M10 7.500h4.500V13" fill="none" stroke="#888"/></svg></i><i><svg viewBox="0 0 22 22"><path d="M7.500 7.500l7 7M14.500 7.500l-7 7" stroke="#333" stroke-width="1.500"/></svg></i></div></header>
<nav class="menu"><span><u>P</u>rojekti</span><span><u>M</u>uokkaa</span><span><u>N</u>äytä</span><span><u>T</u>asot</span><span><u>A</u>setukset</span><span><u>L</u>isäosat</span><span>Vekt<u>o</u>ri</span><span><u>R</u>asteri</span><span><u>T</u>ietokanta</span><span><u>V</u>erkko</span><span><u>M</u>esh</span><span>Prosessointi</span><span><u>O</u>hje</span></nav>

<div class="bar"><b class="grip first"></b><svg class="t"><use href="#new"/></svg><svg class="t"><use href="#open"/></svg><svg class="t"><use href="#save"/></svg><svg class="t"><use href="#layout"/></svg><svg class="t"><use href="#manager"/></svg><svg class="t"><use href="#styles"/></svg><b class="grip"></b><svg class="t on"><use href="#hand"/></svg><svg class="t off"><use href="#pan"/></svg><svg class="t"><use href="#zin"/></svg><svg class="t"><use href="#zout"/></svg><svg class="t"><use href="#zfull"/></svg><svg class="t off"><use href="#zsel"/></svg><svg class="t"><use href="#zlay"/></svg><svg class="t off"><use href="#z11"/></svg><svg class="t"><use href="#zlast"/></svg><svg class="t off"><use href="#znext"/></svg><svg class="t"><use href="#nmap"/></svg><svg class="t"><use href="#n3d"/></svg><svg class="t"><use href="#nbook"/></svg><svg class="t"><use href="#book"/></svg><svg class="t"><use href="#clock"/></svg><svg class="t"><use href="#refresh"/></svg><b class="grip"></b><svg class="t"><use href="#sel"/></svg><b class="d"></b><svg class="t"><use href="#selform"/></svg><b class="d"></b><svg class="t"><use href="#desel"/></svg><b class="d"></b><svg class="t"><use href="#selloc"/></svg><b class="d"></b><b class="grip"></b><svg class="t"><use href="#ident"/></svg><svg class="t"><use href="#abac"/></svg><svg class="t"><use href="#gear"/></svg><svg class="t"><use href="#sigma"/></svg><svg class="t"><use href="#table"/></svg><b class="d"></b><svg class="t"><use href="#measure"/></svg><b class="d"></b><svg class="t"><use href="#tip"/></svg><svg class="t off"><use href="#action"/></svg><b class="d off"></b></div>

<div class="bar"><b class="grip first"></b><svg class="t"><use href="#dsm"/></svg><svg class="t"><use href="#gpkgn"/></svg><svg class="t"><use href="#shp"/></svg><svg class="t"><use href="#feathern"/></svg><svg class="t"><use href="#chip"/></svg><svg class="t"><use href="#mesh"/></svg><svg class="t"><use href="#virt"/></svg><b class="grip"></b><svg class="t off"><use href="#pencils"/></svg><svg class="t"><use href="#pencil"/></svg><svg class="t off"><use href="#savee"/></svg><svg class="t off"><use href="#line"/></svg><b class="d off"></b><svg class="t off"><use href="#b2"/></svg><svg class="t off"><use href="#vert"/></svg><b class="d off"></b><svg class="t off"><use href="#multi"/></svg><svg class="t off"><use href="#trash"/></svg><svg class="t off"><use href="#cut"/></svg><svg class="t off"><use href="#copy"/></svg><svg class="t off"><use href="#paste"/></svg><svg class="t off"><use href="#undo"/></svg><svg class="t off"><use href="#redo"/></svg><b class="grip"></b><svg class="t"><use href="#abc"/></svg><svg class="t"><use href="#diag"/></svg><b class="sep"></b><svg class="t"><use href="#abcp"/></svg><svg class="t"><use href="#abcr"/></svg><b class="sep"></b><svg class="t off"><use href="#abcp"/></svg><svg class="t off"><use href="#abce"/></svg><svg class="t off"><use href="#abcg"/></svg><svg class="t off"><use href="#abch"/></svg><svg class="t off"><use href="#abci"/></svg><b class="grip"></b><svg class="t"><use href="#msearch"/></svg><b class="grip"></b><svg class="t"><use href="#python"/></svg><svg class="t"><use href="#io1"/></svg><svg class="t"><use href="#io2"/></svg><svg class="t"><use href="#io3"/></svg><svg class="t"><use href="#io4"/></svg><b class="grip"></b><svg class="t"><use href="#help"/></svg><b class="grip"></b><svg class="t"><use href="#topo"/></svg></div>

<div class="bar"><b class="grip first"></b><svg class="t off"><use href="#square"/></svg><svg class="t off"><use href="#b0"/></svg><b class="d off"></b><svg class="t off"><use href="#b1"/></svg><svg class="t off"><use href="#b0"/></svg><svg class="t off"><use href="#b9"/></svg><svg class="t off"><use href="#b3"/></svg><svg class="t off"><use href="#b4"/></svg><svg class="t off"><use href="#b3"/></svg><svg class="t off"><use href="#b5"/></svg><svg class="t off"><use href="#b6"/></svg><svg class="t off"><use href="#b7"/></svg><svg class="t off"><use href="#b8"/></svg><svg class="t off"><use href="#vr"/></svg><svg class="t off"><use href="#cross"/></svg><svg class="t off"><use href="#sciss"/></svg><svg class="t off"><use href="#sciss"/></svg><svg class="t off"><use href="#merge"/></svg><svg class="t off"><use href="#attrs"/></svg><svg class="t off"><use href="#rot"/></svg><b class="d off"></b><b class="grip"></b><svg class="t"><use href="#magnet"/></svg><svg class="t off"><use href="#snap"/></svg><i class="pressed"><svg class="t off"><use href="#pts"/></svg></i><div class="spin dis tol"><span>12</span><b class="ud"></b></div><div class="combo dis px"><span>px</span><b class="d off"></b></div><svg class="t"><use href="#tedit"/></svg><svg class="t"><use href="#avoid"/></svg><svg class="t off"><use href="#x1"/></svg><svg class="t off"><use href="#x2"/></svg><b class="d off"></b><svg class="t off"><use href="#x3"/></svg></div>

<main>
<aside class="left">
<section class="dock browser">
<div class="dh"><h2>Selain</h2><svg><use href="#float"/></svg><svg><use href="#close"/></svg></div>
<div class="mini"><svg><use href="#sqadd"/></svg><svg><use href="#refresh"/></svg><svg><use href="#funnel"/></svg><svg><use href="#treeup"/></svg><svg><use href="#info"/></svg></div>
<div class="tree"><ul>
<li><b class="a"></b><svg><use href="#fav"/></svg>Suosikit</li>
<li><b class="a r"></b><svg><use href="#book"/></svg>Sijaintikirjainmerkit</li>
<li><b class="a r"></b><svg><use href="#pfold"/></svg>Projektikansio</li>
<li><b class="a r"></b><svg><use href="#home"/></svg>Koti</li>
<li><b class="a r"></b><svg><use href="#fold"/></svg>/</li>
<li><b class="a"></b><svg><use href="#gpkg"/></svg>GeoPackage</li>
<li><b class="a"></b><svg><use href="#feather"/></svg>SpatiaLite</li>
<li><b class="a o"></b><svg><use href="#pg"/></svg>PostgreSQL</li>
<li class="sub"><b class="a r"></b><svg><use href="#conn"/></svg>infrao</li>
<li><b class="a"></b><svg><use href="#hana"/></svg>SAP HANA</li>
<li><b class="a"></b><svg><use href="#mssql"/></svg>MS SQL Server</li>
<li><b class="a"></b><svg><use href="#globe"/></svg>WMS/WMTS</li>
<li><b class="a"></b><svg><use href="#vt"/></svg>Vector Tiles</li>
<li><b class="a r"></b><svg><use href="#xyz"/></svg>XYZ Tiles</li>
<li><b class="a"></b><svg><use href="#wcs"/></svg>WCS</li>
</ul><div class="sb"><b class="su"></b><b class="sh"></b><b class="sg"></b><b class="sd"></b></div></div>
</section>
<div class="split"></div>
<section class="dock layers">
<div class="dh"><h2>Tasot</h2><svg><use href="#float"/></svg><svg><use href="#close"/></svg></div>
<div class="mini lm"><i class="pressed"><svg><use href="#brush"/></svg></i><svg><use href="#grpadd"/></svg><svg><use href="#eyed"/></svg><svg><use href="#funneld"/></svg><svg class="ep"><use href="#eps"/></svg><b class="d"></b><svg><use href="#treedn"/></svg><svg><use href="#treeup"/></svg><svg><use href="#sqdel"/></svg></div>
<div class="tree lt"><ul>
<li><b class="a o"></b><svg><use href="#chk"/></svg><svg><use href="#grp"/></svg>Kohteet</li>
<li class="l1"><b class="a o"></b><svg><use href="#chk"/></svg><svg><use href="#grp"/></svg>Erikoisrakennekerros</li>
<li class="l2 sel"><b class="a"></b><svg><use href="#chk"/></svg><i class="sw"></i><strong>erikoisrakennekerros_alue [1]</strong></li>
<li class="l2"><b class="a r"></b><svg><use href="#chk"/></svg><svg><use href="#grp"/></svg>Muut</li>
<li class="l1"><b class="a r"></b><svg><use href="#chk"/></svg><svg><use href="#grp"/></svg>Hulevesi</li>
<li class="l1"><b class="a r"></b><svg><use href="#chk"/></svg><svg><use href="#grp"/></svg>Pysakointiruutu</li>
<li class="l1"><b class="a r"></b><svg><use href="#chk"/></svg><svg><use href="#grp"/></svg>Rakenne</li>
<li class="l1"><b class="a r"></b><svg><use href="#chk"/></svg><svg><use href="#grp"/></svg>Ympäristötaide</li>
<li><b class="a r"></b><svg><use href="#chk"/></svg><svg><use href="#grp"/></svg>Kasvillisuus</li>
<li><b class="a o"></b><svg><use href="#chk"/></svg><svg><use href="#grp"/></svg>Varusteet</li>
<li class="l1"><b class="a r"></b><svg><use href="#chk"/></svg><svg><use href="#grp"/></svg>Jäte</li>
<li class="l1"><b class="a r"></b><svg><use href="#chk"/></svg><svg><use href="#grp"/></svg>Kaluste</li>
<li class="l1"><b class="a r"></b><svg><use href="#chk"/></svg><svg><use href="#grp"/></svg>Leikkiväline</li>
<li class="l1"><b class="a r"></b><svg><use href="#chk"/></svg><svg><use href="#grp"/></svg>Liikennemerkki</li>
<li class="l1"><b class="a r"></b><svg><use href="#chk"/></svg><svg><use href="#grp"/></svg>Liikunta</li>
<li class="l1"><b class="a r"></b><svg><use href="#chk"/></svg><svg><use href="#grp"/></svg>Melu</li>
<li class="l1"><b class="a r"></b><svg><use href="#chk"/></svg><svg><use href="#grp"/></svg>Muu varuste</li>
<li class="l1"><b class="a r"></b><svg><use href="#chk"/></svg><svg><use href="#grp"/></svg>Opaste</li>
<li><b class="a r"></b><svg><use href="#chk"/></svg><svg><use href="#grp"/></svg>Viheralue</li>
<li><b class="a r"></b><svg><use href="#chk"/></svg><svg><use href="#grp"/></svg>Katualue</li>
<li><b class="a r"></b><svg><use href="#chk"/></svg><svg><use href="#grp"/></svg>Osoite</li>
<li><b class="a r"></b><svg><use href="#chk"/></svg><svg><use href="#grp"/></svg>Taustakartat</li>
<li><b class="a r"></b><svg><use href="#chk"/></svg><svg><use href="#grp"/></svg>Meta</li>
<li><b class="a r"></b><svg><use href="#chk"/></svg><svg><use href="#grp"/></svg>Linkit</li>
<li><b class="a"></b><svg><use href="#chk"/></svg><svg><use href="#grp"/></svg>Koodistot</li>
</ul><div class="sb"><b class="su"></b><b class="sh"></b><b class="sg"></b><b class="sd"></b></div></div>
</section>
</aside>
<div class="vsplit"></div>
<svg class="map" viewBox="463 177 412 845">
<path d="M463 177h412v845H463z" fill="#f1efe8"/>
<path d="M463 177H669.500L676.500 325L694 723L700.500 870L463 877z" fill="#eee"/>
<path d="M669.500 177L676.500 325L694 723L700.500 870L463 877" fill="none" stroke="#e2d6d5" stroke-width="1.400"/>
<g fill="none" stroke-linejoin="round"><path d="M538.500 170L551 330L565 508L578 745L792 727" stroke="#d6d6d6" stroke-width="7.500"/><path d="M790 405.500L880 400.500" stroke="#d9d9d9" stroke-width="7"/><path d="M810 826.500H880" stroke="#d9d9d9" stroke-width="22"/></g>
<path d="M764 170L775 418L788 706L794 827Q795 833 799 836L806.700 1030H821L813 813L805.700 655L795 407L784.500 170z" fill="#fff" stroke="#d4d4d4" stroke-width="2"/>
<g fill="none" stroke="#fff" stroke-linejoin="round"><path d="M538.500 170L551 330L565 508L578 745L792 727" stroke-width="4.500"/><path d="M790 405.500L880 400.500" stroke-width="4.500"/><path d="M805 826.500H880" stroke-width="19.500"/></g>
<path d="M551.500 330.500L751 326L769.700 705.500L603.500 734z" fill="#bdcf4d" stroke="#232323"/>
<text x="507.500" y="227" class="p" textLength="15" lengthAdjust="spacingAndGlyphs">P</text>
<text transform="translate(795 761) rotate(86.500)" class="road" textLength="69" lengthAdjust="spacingAndGlyphs">Hakakuja</text>
</svg>

<aside class="right">
<div class="dh"><h2>Layer Styling (default)</h2><svg><use href="#float"/></svg><svg><use href="#close"/></svg></div>
<div class="combo lay"><svg><use href="#poly"/></svg><span>erikoisrakennekerros_alue</span><b class="d"></b></div>
<div class="body">
<div class="tabs"><i class="act"><svg><use href="#brush"/></svg></i><i><svg><use href="#abc"/></svg></i><i><svg><use href="#tmask"/></svg></i><i><svg><use href="#cube"/></svg></i><i><svg><use href="#terrain"/></svg></i><i><svg><use href="#dep"/></svg></i><i><svg><use href="#hist"/></svg></i></div>
<div class="panel">
<div class="combo rend"><svg><use href="#single"/></svg><span>Yksittäinen symboli</span><b class="d"></b></div>
<div class="symrow"><div class="prev"><i></i></div>
<ul class="symtree"><li class="sel"><b class="a o"></b><i class="sw"></i><strong>Täyttö</strong></li><li class="in"><i class="sw"></i>Yksinkertainen täyttö</li></ul>
<div class="sbtns"><button><svg><use href="#plus"/></svg></button><button class="dis"><svg><use href="#up"/></svg></button><button class="dis"><svg><use href="#minus"/></svg></button><button class="dis"><svg><use href="#down"/></svg></button><button class="dis"><svg><use href="#dup"/></svg></button><button class="dis"><svg><use href="#lockx"/></svg></button></div></div>
<hr>
<div class="form">
<div class="fr f1"><label>Väri</label><div class="colbtn"><i></i></div><div class="coldd"><b class="d"></b></div></div>
<div class="fr f2"><label>Peittävyys</label><div class="slider"><i></i><b></b></div><div class="spin op"><span>100,0 %</span><b class="ud"></b></div><svg class="ddi"><use href="#dd"/></svg></div>
<div class="fr f3"><label>Yksikkö</label><div class="combo"><span>Millimetrit</span><b class="d"></b></div></div>
<hr>
<div class="fr f4"><div class="find"><svg class="m"><use href="#mag"/></svg><span>Suosikit</span><svg class="c"><use href="#clear"/></svg><i><b class="d"></b></i></div><svg class="st"><use href="#styles"/></svg></div>
<div class="gal"><div class="gc"><h3>Oletus</h3>
<div class="grid">
<figure><svg viewBox="0 0 66 56"><rect x="2" y="2" width="62" height="52" fill="url(#plasma)" stroke="#222" stroke-width="1.300"/></svg><figcaption>gradient &nbsp; plasma</figcaption></figure>
<figure><svg viewBox="0 0 66 56"><rect x="2.500" y="2.500" width="61" height="51" fill="#969696" stroke="#b4b4b4"/></svg><figcaption>gray 3 fill</figcaption></figure>
<figure><svg viewBox="0 0 66 56"><path d="M2 11l9-9M2 21L21 2M2 31L31 2M2 41L41 2M2 51L51 2M9 54L61 2M19 54L64 9M29 54L64 19M39 54L64 29M49 54L64 39M59 54l5-5" stroke="#000" stroke-width="1.200"/><rect x="2" y="2" width="62" height="52" fill="none" stroke="#000" stroke-width="1.500"/></svg><figcaption>hashed black /</figcaption></figure>
<figure><svg viewBox="0 0 66 56"><path d="M64 11l-9-9M64 21L45 2M64 31L35 2M64 41L25 2M64 51L15 2M57 54L5 2M47 54L2 9M37 54L2 19M27 54L2 29M17 54L2 39M7 54l-5-5" stroke="#000" stroke-width="1.200"/><rect x="2" y="2" width="62" height="52" fill="none" stroke="#000" stroke-width="1.500"/></svg><figcaption>hashed black \</figcaption></figure>
<figure><svg viewBox="0 0 66 56"><path d="M2 11l9-9M2 21L21 2M2 31L31 2M2 41L41 2M2 51L51 2M9 54L61 2M19 54L64 9M29 54L64 19M39 54L64 29M49 54L64 39M59 54l5-5M64 11l-9-9M64 21L45 2M64 31L35 2M64 41L25 2M64 51L15 2M57 54L5 2M47 54L2 9M37 54L2 19M27 54L2 29M17 54L2 39M7 54l-5-5" stroke="#000" stroke-width="1.200"/><rect x="2" y="2" width="62" height="52" fill="none" stroke="#000" stroke-width="1.500"/></svg><figcaption>hashed black X</figcaption></figure>
<figure><svg viewBox="0 0 66 56"><rect x="2" y="2" width="62" height="52" fill="none" stroke="#377eb8" stroke-width="3.400" stroke-linejoin="round"/></svg><figcaption>outline blue</figcaption></figure>
<figure><svg viewBox="0 0 66 56"><rect x="2" y="2" width="62" height="52" fill="none" stroke="#4daf4a" stroke-width="3.400" stroke-linejoin="round"/></svg><figcaption>outline green</figcaption></figure>
<figure><svg viewBox="0 0 66 56"><rect x="2" y="2" width="62" height="52" fill="none" stroke="#e31a1c" stroke-width="3.400" stroke-linejoin="round"/></svg><figcaption>outline red</figcaption></figure>
<figure><svg viewBox="0 0 66 56"><rect x="2" y="2" width="62" height="52" fill="#f5f5f5" stroke="#999" stroke-width="1.500"/><g fill="#4daf4a" stroke="#2f7a2c" stroke-width=".7"><circle cx="2" cy="2" r="3.700"/><circle cx="36" cy="2" r="3.700"/><circle cx="63" cy="9" r="3.700"/><circle cx="2" cy="24" r="3.700"/><circle cx="63" cy="43" r="3.700"/><circle cx="6" cy="54" r="3.700"/><circle cx="40" cy="54" r="3.700"/></g><g fill="#e31a1c" stroke="#901010" stroke-width=".7"><circle cx="2" cy="7" r="3.700"/><circle cx="19" cy="2" r="3.700"/><circle cx="53" cy="2" r="3.700"/><circle cx="63" cy="26" r="3.700"/><circle cx="2" cy="41" r="3.700"/><circle cx="23" cy="54" r="3.700"/><circle cx="57" cy="54" r="3.700"/></g></svg><figcaption>outline xpattern</figcaption></figure>
<figure><svg viewBox="0 0 66 56"><rect x="2" y="2" width="62" height="52" fill="url(#dots)" stroke="#222" stroke-width="1.300"/></svg><figcaption>pattern dot black</figcaption></figure>
<figure><svg viewBox="0 0 66 56"><g transform="translate(2 11)"><rect y="-9" width="62" height="52" fill="url(#hz)" stroke="#ff7f30"/></g></svg><figcaption>pattern zelda</figcaption></figure>
<figure><svg viewBox="0 0 66 56"><rect x="2" y="2" width="62" height="52" fill="#377eb8" stroke="#30699a"/></svg><figcaption>simple blue fill</figcaption></figure>
<figure><svg viewBox="0 0 66 56"><rect x="2" y="2" width="62" height="52" fill="#4daf4a" stroke="#3f8f3c"/></svg></figure>
<figure><svg viewBox="0 0 66 56"><rect x="2" y="2" width="62" height="52" fill="#e31a1c" stroke="#b01818"/></svg></figure>
</div></div><div class="sb"><b class="su"></b><b class="sh"></b><b class="sg"></b><b class="sd"></b></div></div>
<div class="acts"><i class="pressed"><svg><use href="#grid9"/></svg></i><svg><use href="#table"/></svg><button>Tallenna symboli…</button><button class="la">Lisäasetukset<b class="d"></b></button></div>
</div>
<div class="coll"><svg viewBox="0 0 8 12"><path d="M0 0l8 6-8 6z" fill="#333"/></svg><h4>Tason piirto</h4></div>
<div class="apply"><button><svg><use href="#undo"/></svg></button><button><svg><use href="#redo"/></svg></button><label><svg><use href="#chk"/></svg>Automaattinen päivitys</label><button class="kay"><svg><use href="#ok"/></svg>Käytä</button></div>
</div></div>
</aside>
</main>
<footer>
<div class="loc"><svg><use href="#mag"/></svg>Etsi (Ctrl+K)</div>
<label class="k1">Koordinaatit</label><div class="box coord">420399,2&nbsp; 7114152,9</div><svg class="k2"><use href="#sat"/></svg>
<label class="k3">Mittakaava</label><div class="box scale"><span>1:385</span><i><b class="d"></b></i></div><svg class="k4"><use href="#lock"/></svg>
<label class="k5">Suurennus</label><div class="spin fs"><span>100%</span><b class="ud"></b></div>
<label class="k6">Kierto</label><div class="spin fs"><span>0,0 °</span><b class="ud"></b></div>
<svg class="k7"><use href="#chk"/></svg><label class="k8">Piirrä</label><svg class="k9"><use href="#crs"/></svg><label class="k10">EPSG:3067</label><svg class="k11"><use href="#msg"/></svg>
</footer>
<div class="mark m1"></div><div class="mark m2"></div><div class="mark m3"></div>
<span class="num n1">1.</span><span class="num n2">2.</span><span class="num n3">3.</span>
</div>
</body>
</html>
```
FILE: styles.css
```css
*{box-sizing:border-box}
body{margin:0;background:#efefef;color:#000;font:14px/19px "Noto Sans",sans-serif;letter-spacing:.15px}
ul,h1,h2,h3,h4,figure{margin:0;padding:0;font:inherit;list-style:none}
i{font-style:normal}
svg{display:block;flex:none;overflow:hidden}
.defs{position:absolute;width:0;height:0}
.symbols{visibility:hidden}
.ic,.icn{font-family:"Noto Sans",sans-serif;letter-spacing:0}
.icb{font-family:"Noto Sans",sans-serif;font-weight:700;letter-spacing:0}
.ics{font-family:"Liberation Serif",serif;font-weight:700;letter-spacing:0}
.it{font-style:italic}
.window{position:relative;width:1848px;height:1055px;overflow:hidden;display:flex;flex-direction:column;border:1px solid #bcbcbc}
.title{height:37px;flex:none;display:flex;align-items:center;background:#ebebeb;border-bottom:1px solid #b8b8b8;box-shadow:inset 0 1px #fff;padding:0 6px 0 843px}
.title h1{font-size:14px;font-weight:700;color:#3d3d3d;flex:1;letter-spacing:.34px}
.wbtns{display:flex;gap:12px}
.wbtns i{width:22px;height:22px;border-radius:11px;background:#dadada}
.menu{height:22px;flex:none;display:grid;grid-template-columns:68px 76px 54px 52px 83px 70px 64px 62px 88px 62px 52px 97px 60px;padding-left:10px;line-height:22px;border-bottom:1px solid #d2d2d2}
.menu span{white-space:nowrap}
.menu u{text-underline-offset:3px;text-decoration-thickness:1.500px}
.bar{height:39px;flex:none;display:flex;align-items:center;background:linear-gradient(#f9f9f9,#eee);border-bottom:1px solid #b5b5b5;margin-left:-1px}
.t{width:33px;height:24px}
.off{opacity:.36;filter:grayscale(.7)}
.on,.pressed{background:#d9d9d9;border:1px solid #a9a9a9;border-radius:3px}
.t.on{width:31px;height:31px;padding:3px;margin:0 1px}
.grip{width:16px;height:18px;flex:none;background:radial-gradient(circle,#bbb 40%,transparent 50%) 0 0/3px 3px content-box;background-clip:content-box;padding:0 4px 0 8px}
.grip.first{width:14px;padding:0 4px 0 6px}
.sep{width:6.500px;height:28px;flex:none;background:linear-gradient(#c8c8c8,#c8c8c8) 3px 0/1px 28px no-repeat}
.d{width:12px;flex:none;height:5px;background:#555;clip-path:polygon(2px 0,10px 0,6px 5px);opacity:.9}
.d.off{opacity:.3}
.bar .pressed{width:32px;height:31px;display:flex;align-items:center;background:#dcdcdc;border-color:#c4c4c4}
.bar .pressed .t{width:30px}
.spin,.combo,.box,.find,.loc,button{background:#fff;border:1px solid #b0b0b0;border-radius:3px}
.spin{display:flex;align-items:center}
.spin span{flex:1;padding-left:5px;white-space:nowrap}
.ud{width:15px;align-self:stretch;border-left:1px solid #c4c4c4;background:
 conic-gradient(from 145deg at 50% 0,#555 70deg,transparent 0) center calc(50% - 4px)/7px 4px no-repeat,
 conic-gradient(from -35deg at 50% 100%,#555 70deg,transparent 0) center calc(50% + 4px)/7px 4px no-repeat,linear-gradient(#fff,#f2f2f2)}
.dis .ud{opacity:.4}
.combo{display:flex;align-items:center;background:linear-gradient(#fdfdfd,#ebebeb)}
.combo span{flex:1}
.combo .d{margin-right:5px}
.spin.dis,.combo.dis{background:#f0f0f0;color:#aaa;border-color:#c4c4c4}
.tol{width:105px;height:25px;margin-left:1px}
.px{width:111px;height:25px;padding-left:4px}
main{flex:none;display:flex;height:847px;margin-top:-1px;border-top:1px solid #b4b4b4}
.left{width:455px;flex:none;display:flex;flex-direction:column;margin-top:-1px}
.dh{display:flex;align-items:center;height:20px;padding:0 2px 0 4px}
.dh h2{flex:1}
.dh svg{width:12px;height:12px;margin-left:2px}
.mini{display:flex;height:29px;align-items:center;padding-left:8px;gap:9px}
.mini svg{width:16px;height:16px}
.browser{height:328px;flex:none;padding-top:0}
.browser .dh{padding-top:1px}
.tree{display:flex;border:1px solid #b4b4b4;background:#fff;height:277px;overflow:hidden}
.browser .mini{height:31px;padding-bottom:1px}
.tree ul{flex:1}
.tree li{display:flex;align-items:center;height:19px;white-space:nowrap;padding-left:1px}
.tree li svg{width:16px;height:16px;margin:0 7px 0 4px}
.tree li.sub{padding-left:17px}
.a{width:14px;height:10px;flex:none}
.a.r{background:#555;clip-path:polygon(5px 1px,9.500px 5px,5px 9px)}
.a.o{background:#555;clip-path:polygon(3px 3px,11px 3px,7px 7px)}
.sb{width:14px;flex:none;display:flex;flex-direction:column;border-left:1px solid #b4b4b4}
.sb b{display:block;flex:none}
.su,.sd{height:14px;background:conic-gradient(from 120deg at 50% 0,#555 120deg,transparent 0) center/8px 4px no-repeat,#fcfcfc;border-bottom:1px solid #b4b4b4}
.sd{background:conic-gradient(from -60deg at 50% 100%,#555 120deg,transparent 0) center/8px 4px no-repeat,#fcfcfc;border:0;border-top:1px solid #b4b4b4}
.sh{background:linear-gradient(90deg,#fff,#f1f1f1)}
.sb .sg{flex:1;background:#e3e3e3;border-top:1px solid #b4b4b4}
.browser .sh{height:204px}
.split{height:6px;flex:none;display:flex;justify-content:center;align-items:center;padding-right:0}
.split::after{content:"";width:17px;height:1px;background:repeating-linear-gradient(90deg,#aaa 0 1px,transparent 1px 3px)}
.layers .dh{height:18px;padding-top:2px}
.layers .mini{height:32px;padding:0 0 2px 4px}
.mini .pressed{width:24px;height:23px;padding:2px 3px;margin-right:-4px}
.lm .ep{margin-right:-11px;margin-left:1px}
.lm .d{margin-left:5px;margin-right:-4px}
.tree.lt{height:462px}
.tree.lt li{padding-left:3px}
.tree.lt li.l1{padding-left:23px}
.tree.lt li.l2{padding-left:43px}
.tree.lt li svg{width:14px;height:14px;margin:0 0 0 6px}
.tree.lt li svg+svg{margin:0 7px 2px 7px}
li.sel{background:#308cc6;color:#fff}
strong{font-weight:700}
.lt strong{text-decoration:underline;text-underline-offset:3px}
.sw{width:16px;height:16px;flex:none;background:#bdcf4d;border:1px solid #7f8a38}
.lt .sw{margin:0 6px}
.lt .sh{height:421px}
.vsplit{width:6px;flex:none;display:flex;align-items:center;justify-content:center}
.vsplit::after{content:"";width:1px;height:17px;background:repeating-linear-gradient(#aaa 0 1px,transparent 1px 3px)}
.map{width:413px;height:846px;border:1px solid #b4b4b4;border-width:0 0 1px 1px}
.map .p{font:700 15px "Noto Sans",sans-serif;fill:#1a98dc}
.map .road{font:700 14px "Open Sans",sans-serif;fill:#444;letter-spacing:0}
.right{flex:1;padding-left:9px;display:flex;flex-direction:column}
.right .dh{padding:0 1px 0 1px;height:20px}
.lay{height:25px;width:961px;margin-top:2px;padding-left:5px}
.lay svg{width:17px;height:16px;margin-right:2px}
.body{display:flex;flex:1}
.tabs{width:38px;background:#5d5d5d;height:796px}
.tabs i{display:flex;height:32px;align-items:center;padding-left:3px}
.tabs i.act{height:38px;background:#efefef;padding:2px 0 0 6px}
.tabs svg{width:23px;height:23px}
.panel{padding:12px 0 0 3px;width:922px}
.rend{height:25px;padding-left:7px;width:920px}
.rend svg{width:14px;height:15px;margin-right:3px}
.symrow{display:flex;margin-top:5px}
.prev{width:125px;padding:36px 0 0 29px}
.prev i{display:block;width:61px;height:61px;background:#bdcf4d;border:1px solid #222}
.symtree{width:726px;height:119px;margin-top:6px;background:#fff;border:1px solid #b4b4b4}
.symtree li{height:19px;display:flex;align-items:center;padding-left:3px}
.symtree .sw{margin:0 6px}
.symtree li.in{padding-left:37px}
.sbtns{display:grid;grid-template-columns:28px 28px;gap:4px 6px;margin:1px 0 0 6px;grid-auto-rows:24px}
button{background:linear-gradient(#fff,#ededed);padding:0;display:flex;align-items:center;justify-content:center;font:inherit;letter-spacing:inherit;color:#000}
button svg{width:15px;height:15px}
button.dis{border-color:#c8c8c8}
button.dis svg{opacity:.3}
hr{border:0;border-top:1px solid #a8a8a8;border-bottom:1px solid #fff;margin:12px 0 0;width:920px}
.form{width:910px}
.form hr{width:910px;margin-top:4px}
.fr{display:flex;align-items:center}
.fr label{width:76px}
.f1{margin-top:7px;height:28px}
.colbtn{width:822px;height:28px;border:1px solid #b0b0b0;border-radius:3px;background:linear-gradient(#fff,#ededed);padding:5px 4px}
.colbtn i{display:block;height:16px;background:#bdcf4d;border-radius:3px}
.coldd{width:12px;height:28px;border:1px solid #b0b0b0;border-radius:3px;display:flex;align-items:center;background:#f8f8f8}
.coldd .d{margin-left:-1px}
.f2{margin-top:7px;height:23px}
.slider{width:694px;display:flex;align-items:center}
.slider i{flex:1;height:6px;margin-left:1px;background:#3fa3e4;border:1px solid #24638e;border-radius:2px}
.slider b{width:13px;height:13px;background:#fff;border:1px solid #aaa;border-radius:3px}
.op{width:100px;height:23px;margin-left:4px}
.ddi{width:24px;height:18px;margin-left:8px}
.f3{margin-top:8px;height:25px}
.f3 .combo{flex:1;height:25px;padding-left:4px}
.f4{margin-top:5px;height:26px}
.find{width:880px;height:25px;display:flex;align-items:center;padding-left:10px}
.find .m{width:12px;height:12px}
.find span{flex:1;padding-left:7px}
.find .c{width:13px;height:10px}
.find i{width:20px;height:23px;border-left:1px solid #b0b0b0;margin-left:9px;display:flex;align-items:center;padding-left:3px}
.st{width:16px;height:16px;margin-left:10px}
.gal{display:flex;height:376px;margin-top:2px;border:1px solid #b4b4b4;background:#fff;overflow:hidden}
.gc{flex:1;padding:8px 5px 0}
.gc h3{font-size:16px;font-weight:700;line-height:21px;height:22px;border-bottom:1px solid #ddd;letter-spacing:.1px}
.grid{display:grid;grid-template-columns:repeat(6,130px);grid-auto-rows:142px;margin-left:-3px;padding-top:19px}
figure{display:flex;flex-direction:column;align-items:center}
figure svg{width:66px;height:56px;overflow:visible}
figcaption{font-size:12px;line-height:16px;margin-top:33px;white-space:nowrap;letter-spacing:-.25px}
.gal .sh{height:264px}
.acts{display:flex;align-items:center;margin-top:6px;height:26px}
.acts .pressed{width:24px;height:23px;padding:3px}
.acts svg{width:16px;height:16px}
.acts>svg{margin-left:4px;flex:none}
.acts button{height:25px;width:137px;margin-left:auto;white-space:nowrap}
.acts .la{width:113px;margin-left:6px;gap:2px}
.acts .la .d{transform:scale(.75)}
.coll{display:flex;align-items:center;height:20px;margin-top:20px;padding-left:5px}
.coll svg{width:7px;height:11px;margin-right:10px}
.coll h4{font-weight:700}
.apply{display:flex;align-items:center;height:25px;margin-top:4px;width:920px}
.apply button{width:24px;height:23px;margin-right:6px}
.apply label{display:flex;margin-left:auto;margin-right:13px;align-items:center;gap:5px}
.apply label svg{width:14px;height:14px}
.apply .kay{width:81px;height:25px;margin:0;gap:2px}
.kay svg{width:16px;height:16px}
footer{flex:1;display:flex;align-items:center;font-size:12.500px;letter-spacing:-.25px;white-space:nowrap;padding-left:4px}
.loc{width:200px;height:25px;display:flex;align-items:center;padding-left:8px;color:#777;font-size:14px;letter-spacing:0}
.loc svg{width:13px;height:13px;margin-right:7px}
footer label{flex:none}
.k1{margin-left:717px;width:72px}
.box{height:23px;line-height:20px}
.coord{width:133px;padding-left:8px;letter-spacing:-.05px}
.k2{width:16px;height:16px;margin-left:4px}
.k3{margin-left:13px;width:64px}
.scale{width:97px;display:flex;justify-content:space-between;padding-left:4px}
.scale i{border-left:1px solid #b0b0b0;width:20px;display:flex;align-items:center;padding-left:3px}
.k4{width:12px;height:16px;margin-left:12px}
.k5{margin-left:9px;width:61px;letter-spacing:-.45px}
.fs{width:94px;height:23px}
.k6{margin-left:9px;width:43px}
.k7{width:14px;height:14px;margin-left:6px}
.k8{margin-left:5px;width:44px}
.k9{width:15px;height:15px}
.k10{margin-left:3px;width:82px;letter-spacing:-.4px}
.k11{width:16px;height:16px}
.mark{position:absolute;border:2px solid #f00}
.m1{left:61px;top:587px;width:273px;height:37px}
.m2{left:0;top:525px;width:34px;height:32px}
.m3{left:874px;top:171px;width:973px;height:883px}
.num{position:absolute;width:22px;height:30px;background:#fff;color:#f00;font:27px/29px "Liberation Sans",sans-serif;letter-spacing:-.500px;overflow:hidden}
.n1{left:350px;top:585px}
.n2{left:50px;top:523px}
.n3{left:1409px;top:198px}
```
